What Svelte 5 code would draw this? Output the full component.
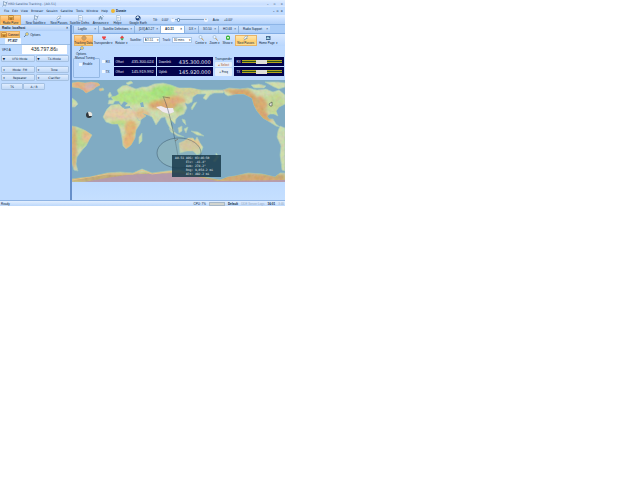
<script lang="ts">
	interface Tool {
		label: string;
		icon: string;
		w: number;
		active?: boolean;
		hot?: boolean;
	}

	const menus = ['File', 'Edit', 'View', 'Browser', 'Session', 'Satellite', 'Tools', 'Window', 'Help'];

	const mainTools: Tool[] = [
		{ label: 'Radio Pane', icon: 'radio', w: 21, active: true },
		{ label: 'New Satellite ▾', icon: 'sat', w: 30 },
		{ label: 'Next Passes', icon: 'pass', w: 16 },
		{ label: 'Satellite Defns', icon: 'doc', w: 25 },
		{ label: 'Announce ▾', icon: 'voice', w: 18 },
		{ label: 'Help ▾', icon: 'doc', w: 16 },
		{ label: 'Google Earth', icon: 'globe', w: 24 }
	];

	const tabs = [
		{ label: 'Logfile', w: 25 },
		{ label: 'Satellite Definitions', w: 36 },
		{ label: '[DX] AO-27', w: 26 },
		{ label: 'AO-51', w: 24, active: true },
		{ label: 'DX', w: 14 },
		{ label: 'SO-50', w: 20 },
		{ label: 'HO-68', w: 20 },
		{ label: 'Radio Support', w: 32 }
	];

	const leftTools: Tool[] = [
		{ label: 'Tracking Data', icon: 'target', w: 19, active: true },
		{ label: 'Transponder ▾', icon: 'heart', w: 19 },
		{ label: 'Rotator ▾', icon: 'rotor', w: 15 }
	];

	const rightTools: Tool[] = [
		{ label: 'Center ▾', icon: 'lens', w: 13 },
		{ label: 'Zoom ▾', icon: 'lens', w: 12 },
		{ label: 'Show ▾', icon: 'show', w: 12 },
		{ label: 'Next Passes', icon: 'pass', w: 22, active: true, hot: true },
		{ label: 'Home Page ▾', icon: 'home', w: 21 }
	];

	const radioButtons = [
		['VFO Mode', 'TX-Mode'],
		['Mode: FM', 'Tone'],
		['Repeater', 'Clarifier']
	];

	const channels = [
		{ name: 'RX', offset: '435.300.024', kind: 'Downlink', freq: '435.300.000' },
		{ name: 'TX', offset: '145.919.992', kind: 'Uplink', freq: '145.920.000' }
	];

	const passInfo = [
		'AO-51 AOS: 03:46:50',
		'      Elv: -41.4°',
		'      Azm: 274.2°',
		'      Rng: 9,054.2 mi',
		'      Alt: 492.2 mi'
	];

	const land = [
		// Greenland and the Canadian islands
		'M0 3 L6 2 L13 3 L19 2 L26 3 L28 5 L24 7 L22 9 L18 11 L14 13 L11 10 L7 8 L0 7Z',
		'M0 18 L4 21 L6 24 L3 27 L0 27Z',
		'M27 9 L31 8 L32 10 L28 11Z',
		// South America
		'M0 46 L5 47 L10 49 L14 51 L20 55 L17 60 L14 66 L11 69 L8 73 L5 77 L4 84 L6 91 L2 90 L0 83Z',
		// Africa
		'M35 29 L39 25 L47 24 L51 28 L58 28 L61 29 L65 37 L69 39 L68 44 L64 50 L63 58 L59 65 L54 69 L51 66 L50 58 L48 49 L46 44 L40 44 L34 42 L31 37Z',
		'M67 57 L70 53 L70 61 L67 64Z',
		// Europe and Asia
		'M36 24 L37 20 L41 20 L39 17 L44 16 L47 14 L45 10 L50 6 L55 5 L59 7 L64 9 L70 7 L75 7 L82 4 L91 3 L99 5 L107 8 L119 8 L129 10 L142 10 L154 10 L151 13 L142 13 L138 15 L134 20 L131 18 L134 14 L125 14 L121 17 L120 22 L116 24 L113 23 L115 28 L112 34 L107 36 L104 39 L103 44 L99 40 L99 45 L102 51 L99 50 L95 43 L93 37 L89 38 L84 45 L80 37 L76 35 L70 33 L74 36 L67 41 L63 34 L59 28 L53 26 L56 23 L52 21 L49 25 L47 21 L43 21 L41 24Z',
		'M36 15 L38 12 L40 16 L37 18Z',
		'M54 3 L59 1 L61 3 L56 5Z',
		'M119 28 L122 23 L125 22 L122 27 L120 30Z',
		'M97 48 L105 54 L112 57 L106 56 L99 52Z',
		'M106 48 L110 46 L110 51 L107 53Z',
		'M112 49 L116 47 L114 53Z',
		'M119 51 L126 52 L132 56 L125 55Z',
		'M110 39 L113 40 L114 45 L111 42Z',
		// Australia
		'M107 63 L112 61 L116 58 L121 58 L123 61 L125 57 L128 63 L131 67 L129 73 L125 75 L121 71 L115 71 L108 73Z',
		'M126 77 L129 77 L128 79Z',
		'M144 73 L147 77 L143 82 L141 81 L144 77Z',
		// North America
		'M151 10 L157 8 L168 9 L176 8 L185 10 L194 9 L201 12 L207 10 L213 15 L213 24 L207 27 L204 31 L206 36 L202 34 L198 34 L195 36 L197 39 L201 39 L204 44 L208 47 L204 46 L196 41 L191 38 L185 31 L182 25 L180 18 L172 14 L164 14 L156 16 L153 14Z',
		'M179 5 L187 4 L194 6 L192 8 L182 8Z',
		'M193 2 L206 2 L213 3 L213 7 L207 9 L202 7Z',
		'M208 46 L213 48 L213 91 L210 90 L208 75 L209 66 L205 57 L206 51Z',
		// Antarctica
		'M0 99 L8 98 L18 97 L35 93 L48 92 L61 93 L70 89 L80 93 L95 91 L108 90 L126 96 L148 100 L156 97 L163 96 L176 93 L190 94 L203 97 L208 93 L213 93 L213 102 L0 102Z'
	];
</script>

<svelte:head>
	<title>HRD Satellite Tracking - [AO-51]</title>
</svelte:head>

{#snippet glyph(kind: string)}
	<svg class="icon" viewBox="0 0 12 12" aria-hidden="true">
		{#if kind === 'radio'}
			<rect x="1" y="1" width="10" height="9" fill="#9b5b15" />
			<path d="M2 2h8v3H2zM2 7h2v2H2zM5 7h2v2H5zM8 7h2v2H8z" fill="#ffd06a" />
		{:else if kind === 'sat'}
			<path d="M3 1l6 3-2 6-4-3z" fill="#e8f2fb" stroke="#52779b" />
			<path d="M1 11l3-4M8 4l3-2" stroke="#46668a" />
		{:else if kind === 'pass'}
			<path d="M2 7q1-6 8-5l-3 4-4 3z" fill="#fff" stroke="#7391ab" />
			<path d="M2 11l4-4h3" fill="none" stroke="#547ea8" />
		{:else if kind === 'voice'}
			<path d="M2 10l3-8 3 8M1 6h9M9 1l2 2" fill="none" stroke="#61839e" stroke-width="1.5" />
		{:else if kind === 'globe'}
			<circle cx="6" cy="6" r="5" fill="#173b79" />
			<path d="M2 5l3-3 4 2-2 2-3 1zM7 8l3-2-1 4z" fill="#d9edf4" />
		{:else if kind === 'target'}
			<circle cx="6" cy="6" r="4" fill="#f5ce8e" stroke="#bb702a" />
			<path d="M6 1v10M1 6h10" stroke="#8b6d55" />
		{:else if kind === 'heart'}
			<path d="M6 10L2 5q0-4 4-2 4-2 4 2z" fill="#ee4444" />
			<path d="M5 9h6" stroke="#68a" />
		{:else if kind === 'rotor'}
			<path d="M2 6l4-5 4 4-4 3z" fill="#e24440" />
			<path d="M3 7l3 4 4-4z" fill="#2bb04b" />
		{:else if kind === 'lens'}
			<circle cx="5" cy="4" r="3" fill="#e9f5ff" stroke="#7fa0c0" />
			<path d="M7 6l4 5" stroke="#c39a55" stroke-width="2" />
		{:else if kind === 'show'}
			<rect x="2" y="1" width="8" height="9" rx="3" fill="#3db53c" />
			<path d="M4 4h4v3H4z" fill="#d8f6cf" />
		{:else if kind === 'home'}
			<rect x="2" y="2" width="9" height="8" fill="#41658e" />
			<path d="M3 6l3-3 4 5H3z" fill="#a8d8e8" />
		{:else if kind === 'gear'}
			<path d="M2 10l5-5" stroke="#6484a8" stroke-width="2" />
			<circle cx="8" cy="4" r="3" fill="#f4d573" stroke="#5c87b2" />
		{:else}
			<path d="M3 1h6l2 2v8H3z" fill="#f4f9ff" stroke="#8ba9c8" />
			<path d="M4 5h5M4 8h5" stroke="#7e9ec2" />
		{/if}
	</svg>
{/snippet}

{#snippet toolButton(tool: Tool)}
	<button class="tool" class:active={tool.active} class:hot={tool.hot} style:flex="0 1 {tool.w}px">
		{@render glyph(tool.icon)}
		<span>{tool.label}</span>
	</button>
{/snippet}

<div class="window">
	<header class="title-bar">
		<span class="caption">{@render glyph('sat')}HRD Satellite Tracking - [AO-51]</span>
		<span class="window-buttons"><button>–</button><button>▫</button><button>×</button></span>
	</header>

	<nav class="menu-bar">
		{#each menus as menu}
			<button>{menu}</button>
		{/each}
		<button class="donate"><i></i>Donate</button>
		<span class="window-buttons"><button>–</button><button>▫</button><button>×</button></span>
	</nav>

	<div class="main-toolbar">
		{#each mainTools as tool}
			{@render toolButton(tool)}
		{/each}
		<label class="tilt" for="tilt">Tilt: <span>0.00°</span></label>
		<button class="step">−</button>
		<input id="tilt" type="range" min="0" max="100" value="8" />
		<button class="step">+</button>
		<button class="auto">Auto</button>
		<span>+0.00°</span>
	</div>

	<div class="body">
		<aside class="radio-pane">
			<h2>Radio: localhost <span>×</span></h2>
			<div class="pane-tools">
				<button class="active">{@render glyph('radio')}Connect</button>
				<button>{@render glyph('gear')}Options</button>
			</div>
			<div class="radio-tabs"><button>FT-857</button></div>
			<div class="vfo">
				<span>VFO A</span>
				<output>436.797.86<small>0</small></output>
			</div>
			<div class="radio-grid">
				{#each radioButtons as pair, i}
					{#each pair as label}
						<button><i>{i === 0 ? '▼' : '▾'}</i>{label}</button>
					{/each}
				{/each}
			</div>
			<div class="small-buttons"><button>TS</button><button>A / B</button></div>
		</aside>

		<main class="tracking">
			<div class="tabs">
				{#each tabs as tab}
					<button class:active={tab.active} style:flex="0 1 {tab.w}px"><span>{tab.label}</span><i>×</i></button>
				{/each}
			</div>

			<div class="track-toolbar">
				{#each leftTools as tool}
					{@render toolButton(tool)}
				{/each}
				<label class="pick">Satellite:
					<span class="combo"><select><option>AO-51</option></select></span>
				</label>
				<label class="pick">Track:
					<span class="combo"><select class="wide"><option>30 mins</option></select></span>
				</label>
				{#each rightTools as tool}
					{@render toolButton(tool)}
				{/each}
			</div>
			<button class="tool options">{@render glyph('gear')}<span>Options</span></button>

			<div class="tuning">
				<fieldset>
					<legend>Manual Tuning</legend>
					<label><input type="checkbox" /> Enable</label>
				</fieldset>
				<div class="channels">
					{#each channels as channel}
						<div class="channel">
							<label><input type="checkbox" /> {channel.name}</label>
							<div class="readout"><span>Offset</span><b>{channel.offset}</b></div>
							<div class="readout"><span>{channel.kind}</span><b class="large">{channel.freq}</b></div>
						</div>
					{/each}
				</div>
				<div class="transponder">
					<span>Transponder</span>
					<button class="select-button">◂ Select</button>
					<button>+ Freq</button>
				</div>
				<div class="meters">
					{#each channels as channel}
						<div class="meter"><span>{channel.name}</span><div class="scale"><i></i></div></div>
					{/each}
				</div>
			</div>

			<div class="map">
				<svg viewBox="0 0 213 102" role="img" aria-label="World map">
					<defs>
						<filter id="terrain" x="0" y="0" width="100%" height="100%">
							<feTurbulence type="fractalNoise" baseFrequency="0.25" numOctaves="3" seed="8" />
							<feColorMatrix values="1.2 0 0 0 0.3  0 1.1 0 0 0.3  0 0 0.9 0 0.2  0 0 0 0 0.4" />
						</filter>
						<filter id="soft"><feGaussianBlur stdDeviation="1.6" /></filter>
						<clipPath id="land">
							{#each land as d}
								<path {d} />
							{/each}
						</clipPath>
					</defs>
					<rect width="213" height="102" fill="#80abc3" />
					{#each land as d}
						<path {d} fill="#c2d5a2" stroke="#9cc4b8" stroke-width="1" />
					{/each}
					<g clip-path="url(#land)">
						<g filter="url(#soft)">
							<path d="M0 0H30V15H0Z" fill="#dca16b" />
							<ellipse cx="18" cy="6" rx="6" ry="3" fill="#c6a4af" />
							<ellipse cx="48" cy="34" rx="17" ry="6" fill="#dfc199" />
							<ellipse cx="47" cy="43" rx="9" ry="3" fill="#a9d174" />
							<ellipse cx="59" cy="48" rx="6" ry="8" fill="#dba35a" />
							<ellipse cx="57" cy="61" rx="6" ry="8" fill="#dea45d" />
							<ellipse cx="70" cy="34" rx="7" ry="5" fill="#d8ae79" />
							<ellipse cx="64" cy="17" rx="24" ry="7" fill="#a0e070" />
							<ellipse cx="93" cy="12" rx="14" ry="7" fill="#90dc64" />
							<ellipse cx="91" cy="25" rx="15" ry="5" fill="#d39753" />
							<ellipse cx="102" cy="20" rx="12" ry="4" fill="#d59c61" />
							<ellipse cx="115" cy="12" rx="14" ry="5" fill="#c5c587" />
							<ellipse cx="107" cy="29" rx="5" ry="4" fill="#a3c674" />
							<ellipse cx="118" cy="65" rx="11" ry="7" fill="#e0bd80" />
							<ellipse cx="9" cy="58" rx="9" ry="10" fill="#a8d079" />
							<ellipse cx="15" cy="56" rx="5" ry="7" fill="#e0b174" />
							<ellipse cx="2" cy="67" rx="3" ry="22" fill="#c99b5d" />
							<path d="M151 9H176L187 19 200 41H190L179 25Z" fill="#cc914e" />
							<ellipse cx="203" cy="24" rx="9" ry="11" fill="#b4cf82" />
							<ellipse cx="188" cy="25" rx="7" ry="9" fill="#cf9655" />
							<path d="M0 96L35 93 61 93 110 92 213 94V102H0Z" fill="#b5955c" />
							<path d="M150 98L179 95 211 98V102H140Z" fill="#c99355" />
						</g>
						<rect width="213" height="102" filter="url(#terrain)" opacity="0.6" />
						<path d="M84 27L89 26 94 28 101 28 102 32 97 34 91 32Z" fill="#f0e9f0" />
						<path d="M12 102L34 98 55 95 70 94 106 93 145 101 213 100V102Z" fill="#b398b4" opacity="0.85" />
						<path d="M0 100L35 94 61 94 70 90 80 94 95 92 108 91" fill="none" stroke="#e2c48b" stroke-width="1" />
					</g>
					<path d="M53 27L58 26 58 28 52 29M68 23L71 22 72 27 69 27M54 18L57 17" fill="#83afc2" />
					<g fill="none" stroke="#263f51" stroke-width="0.4">
						<path d="M91 16C96 28 99 40 103 60S105 74 108 80" />
						<ellipse cx="107" cy="73" rx="22" ry="15" fill="#a6c6b8" fill-opacity="0.3" />
					</g>
					<path d="M92 17L98 18M106 59L103 61" stroke="#694d38" stroke-width="0.5" />
					<circle cx="17" cy="35" r="3" fill="#30363b" />
					<path d="M16 32A3 3 0 0 1 20 36L17 36Z" fill="#e8e8e2" />
					<path d="M197 24L200 22 200 26 198 26Z" fill="#e9e9dd" stroke="#444b41" stroke-width="0.6" />
				</svg>
				<pre class="pass-info">{passInfo.join('\n')}</pre>
			</div>
		</main>
	</div>

	<footer class="status">
		<span class="ready">Ready</span>
		<span>CPU: 7%</span>
		<i></i>
		<b>Default</b>
		<span class="muted">DDE Server Logs</span>
		<b>16:01</b>
		<span class="muted">3:46</span>
	</footer>
</div>

<style>
	:global(body) {
		background: #fff;
	}

	.window {
		display: flex;
		flex-direction: column;
		width: 100%;
		max-width: 285px;
		font: 3px/4px 'Liberation Sans', Arial, sans-serif;
		color: #0a1f40;
		background: #bfdbff;
	}

	button,
	input,
	select {
		min-width: 0;
		margin: 0;
		padding: 0;
		border: 0;
		font: inherit;
		color: inherit;
		background: none;
	}

	button {
		white-space: nowrap;
	}

	i {
		font-style: normal;
	}

	.icon {
		display: block;
		flex: none;
		width: 6px;
		height: 6px;
	}

	.title-bar,
	.menu-bar {
		display: flex;
		align-items: center;
		height: 7px;
		padding: 0 2px;
		font-family: 'DejaVu Sans', Verdana, sans-serif;
	}

	.title-bar {
		color: #466284;
		background: linear-gradient(#dfedff, #c8deff 60%, #d9e9ff);
	}

	.caption {
		display: flex;
		align-items: center;
	}

	.window-buttons {
		display: flex;
		gap: 5px;
		margin-left: auto;
		font-weight: 700;
	}

	.menu-bar {
		height: 8px;
		gap: 3px;
		padding-left: 4px;
	}

	.menu-bar .window-buttons {
		gap: 2px;
	}

	.donate {
		display: flex;
		align-items: center;
		gap: 1px;
		font-family: 'Liberation Sans', Arial, sans-serif;
		font-weight: 700;
	}

	.donate i {
		width: 4px;
		height: 4px;
		border-radius: 2px;
		background: #efb735;
	}

	.main-toolbar {
		display: flex;
		align-items: center;
		box-sizing: border-box;
		height: 10px;
		border-bottom: 1px solid #8db5e7;
		background: linear-gradient(#e4efff, #c6deff 50%, #b3d1f8);
	}

	.tool {
		display: flex;
		flex-direction: column;
		align-items: center;
		justify-content: center;
		height: 10px;
	}

	.tool.active,
	.pane-tools .active {
		background: linear-gradient(#ffdca0, #fdb05a 60%, #ffd97a);
		box-shadow: inset 0 0 0 1px #e6b469;
	}

	.tool.hot {
		background: linear-gradient(#ffeab8, #ffd070 60%, #ffe39a);
	}

	.tilt {
		display: flex;
		gap: 4px;
		margin: 0 2px 0 3px;
	}

	.step {
		width: 4px;
		height: 4px;
		border-radius: 2px;
		line-height: 3px;
		background: #eef5ff;
	}

	input[type='range'] {
		appearance: none;
		width: 29px;
		height: 4px;
		background: linear-gradient(#0000 1px, #7fa1c6 1px, #7fa1c6 2px, #0000 2px);
	}

	input[type='range']::-webkit-slider-thumb {
		appearance: none;
		width: 3px;
		height: 4px;
		border: 1px solid #6c91bc;
		border-radius: 1px;
		background: #fff;
	}

	.auto {
		margin: 0 5px;
	}

	.body {
		display: grid;
		grid-template-columns: 70fr 215fr;
	}

	.radio-pane {
		background: #bfdbff;
	}

	h2 {
		display: flex;
		justify-content: space-between;
		margin: 0;
		padding: 1px 2px;
		font-size: 3px;
		line-height: 4px;
		background: linear-gradient(#d6e6fc, #aecef8);
	}

	.pane-tools {
		display: flex;
		gap: 2px;
		height: 7px;
	}

	.pane-tools button {
		display: flex;
		align-items: center;
		gap: 1px;
		padding: 0 1px;
	}

	.radio-tabs {
		height: 6px;
		padding-left: 5px;
		border-bottom: 1px solid #9abce3;
	}

	.radio-tabs button {
		height: 6px;
		padding: 0 3px;
		border-radius: 1px 1px 0 0;
		font-weight: 700;
		background: #f2f8ff;
	}

	.vfo {
		display: flex;
		align-items: center;
		justify-content: space-between;
		padding: 0 3px 1px 2px;
	}

	.vfo output {
		width: 70%;
		font-size: 5px;
		line-height: 8px;
		text-align: center;
		color: #101820;
		background: #fff;
	}

	.vfo small {
		font-size: 3px;
	}

	.radio-grid {
		display: grid;
		grid-template-columns: 1fr 1fr;
		gap: 1px;
		padding: 0 1px 1px;
	}

	.radio-grid button,
	.small-buttons button {
		height: 7px;
		border: 1px solid #a5c1e2;
		border-radius: 1px;
		font-family: 'DejaVu Sans', Verdana, sans-serif;
		background: linear-gradient(#e0edfe, #c0d8f6);
	}

	.radio-grid button {
		display: grid;
		grid-template-columns: 4px 1fr;
		align-items: center;
	}

	.radio-grid button:nth-child(-n + 2) {
		margin-bottom: 3px;
	}

	.small-buttons {
		display: flex;
		padding: 1px 1px 0;
	}

	.small-buttons button {
		width: 22px;
	}

	.tracking {
		display: flex;
		flex-direction: column;
		min-width: 0;
		padding-bottom: 18px;
		border-left: 2px solid #668fca;
		background: linear-gradient(#bfdbff, #b7d6ff 80%, #c5dfff);
	}

	.tabs {
		display: flex;
		align-items: end;
		height: 8px;
		padding-left: 1px;
		border-bottom: 1px solid #83aee5;
		background: #aacdf8;
	}

	.tabs button {
		display: flex;
		justify-content: space-between;
		height: 7px;
		padding: 1px 2px 0 4px;
		border-left: 1px solid #8fb4df;
		background: linear-gradient(#d1e4fd, #aacbf5);
	}

	.tabs button.active {
		font-weight: 700;
		background: #fff;
	}

	.track-toolbar {
		display: flex;
		align-items: center;
		gap: 1px;
		height: 12px;
		padding-left: 2px;
		background: linear-gradient(#d7e8ff, #bad7fd);
	}

	.track-toolbar .tool {
		height: 11px;
	}

	.pick {
		display: flex;
		flex: none;
		align-items: center;
		gap: 1px;
		margin-right: 2px;
	}

	.combo {
		position: relative;
		display: flex;
	}

	.combo::after {
		content: '▾';
		position: absolute;
		top: 1px;
		right: 1px;
	}

	.pick select {
		appearance: none;
		width: 17px;
		height: 6px;
		padding-left: 1px;
		border: 1px solid #abc6e7;
		background: #fff;
	}

	.pick .wide {
		width: 20px;
	}

	.options {
		align-self: start;
		justify-content: start;
		margin-left: 4px;
	}

	.tuning {
		display: grid;
		grid-template-columns: 27fr 112fr 18fr 50fr;
		gap: 2px;
		height: 24px;
		padding: 0 1px;
	}

	fieldset {
		min-width: 0;
		height: 22px;
		box-sizing: border-box;
		margin: 0;
		padding: 2px 5px;
		border: 1px solid #94b8e4;
		border-radius: 1px;
	}

	legend {
		margin-left: -4px;
		padding: 0;
		white-space: nowrap;
	}

	input[type='checkbox'] {
		appearance: none;
		flex: none;
		width: 3px;
		height: 3px;
		background: #f0f7ff;
	}

	fieldset label,
	.channel label {
		display: flex;
		align-items: center;
		gap: 1px;
	}

	.channels,
	.meters,
	.transponder {
		display: flex;
		flex-direction: column;
		gap: 1px;
		min-width: 0;
		padding-top: 1px;
	}

	.channel {
		display: grid;
		grid-template-columns: 11fr 43fr 57fr;
		gap: 1px;
		height: 9px;
	}

	.readout,
	.meter {
		display: flex;
		align-items: center;
		justify-content: space-between;
		height: 9px;
		padding: 0 2px;
		color: #e7ecf8;
		background: #03034c;
	}

	.readout b {
		font-size: 4px;
		font-weight: 400;
	}

	.readout .large {
		font-family: 'DejaVu Sans', Verdana, sans-serif;
		font-size: 5px;
	}

	.transponder {
		overflow: hidden;
		text-align: center;
	}

	.transponder button {
		height: 8px;
		border-radius: 1px;
		background: #e5effb;
	}

	.transponder .select-button {
		height: 5px;
		color: #a85229;
	}

	.scale {
		display: flex;
		align-items: center;
		justify-content: center;
		width: 40px;
		height: 5px;
		background: linear-gradient(#0000 1px, #b4a51e 1px, #b4a51e 2px, #25501e 2px, #25501e 3px, #b4a51e 3px, #b4a51e 4px, #0000 4px);
	}

	.scale i {
		width: 11px;
		height: 4px;
		background: #deded8;
	}

	.map {
		position: relative;
	}

	.map > svg {
		display: block;
		width: 100%;
		height: auto;
	}

	.pass-info {
		position: absolute;
		top: 74%;
		left: 47%;
		width: 23%;
		box-sizing: border-box;
		margin: 0;
		padding: 1px 3px;
		font: 3px/4px 'DejaVu Sans Mono', monospace;
		color: #e4edf0;
		background: #18384ad9;
	}

	.status {
		display: flex;
		align-items: center;
		gap: 3px;
		height: 5px;
		padding: 0 1px;
		border-top: 1px solid #8eb3e3;
		background: linear-gradient(#e3efff, #bcd8fb);
	}

	.ready {
		margin-right: auto;
	}

	.status i {
		box-sizing: border-box;
		width: 16px;
		height: 4px;
		border: 1px solid #a8b8c8;
		background: #d1d4cf;
	}

	.muted {
		color: #9aabc4;
	}
</style>
